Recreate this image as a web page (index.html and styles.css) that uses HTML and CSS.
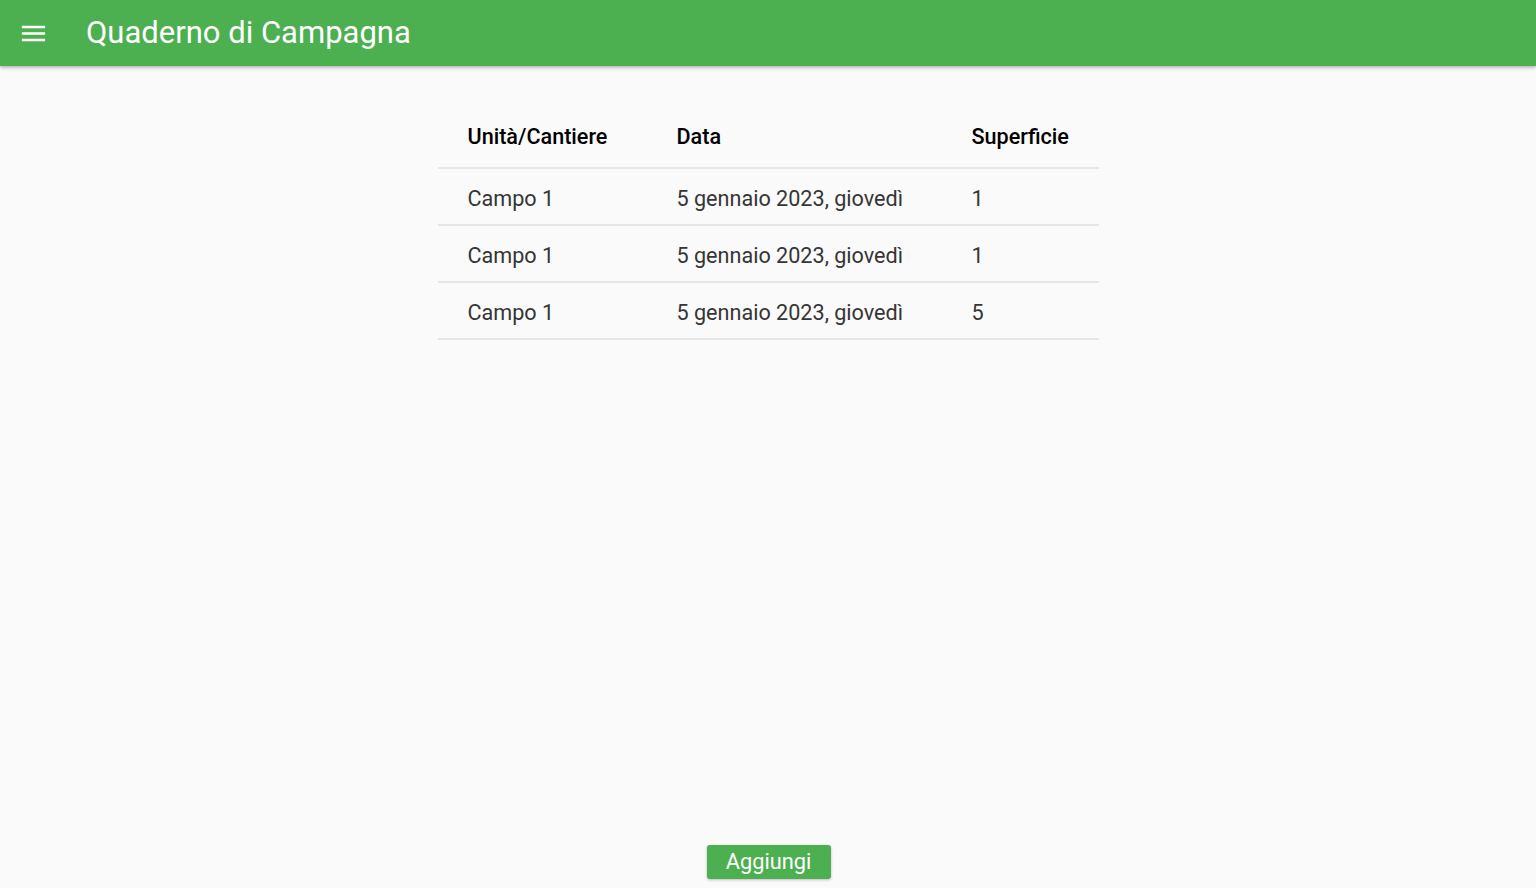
FILE: index.html
```html
<!DOCTYPE html>
<html lang="it">
<head>
<meta charset="utf-8">
<title>Quaderno di Campagna</title>
<link rel="stylesheet" href="styles.css">
</head>
<body>
<div class="app">
  <header class="appbar">
    <button class="menu" aria-label="menu">
      <svg width="24" height="24" viewBox="0 0 24 24"><path d="M3 18h18v-2H3v2zm0-5h18v-2H3v2zm0-7v2h18V6H3z" fill="#fff"/></svg>
    </button>
    <h1 class="title">Quaderno di Campagna</h1>
  </header>
  <main class="content">
    <table class="grid">
      <thead>
        <tr><th class="c1">Unità/Cantiere</th><th class="c2">Data</th><th class="c3">Superficie</th></tr>
      </thead>
      <tbody>
        <tr><td>Campo 1</td><td>5 gennaio 2023, giovedì</td><td>1</td></tr>
        <tr><td>Campo 1</td><td>5 gennaio 2023, giovedì</td><td>1</td></tr>
        <tr><td>Campo 1</td><td>5 gennaio 2023, giovedì</td><td>5</td></tr>
      </tbody>
    </table>
  </main>
  <footer class="actions">
    <button class="add">Aggiungi</button>
  </footer>
</div>
</body>
</html>
```
FILE: styles.css
```css
html, body {
  margin: 0;
  padding: 0;
  height: 100%;
}
body {
  background: #fafafa;
  font-family: Roboto, "Noto Sans", sans-serif;
  overflow: hidden;
}
.app {
  height: 888px;
  display: flex;
  flex-direction: column;
}
.appbar {
  height: 66px;
  flex: 0 0 66px;
  background: #4caf50;
  display: flex;
  align-items: center;
  box-shadow: 0 2px 4px rgba(0,0,0,0.2), 0 1px 2px rgba(0,0,0,0.12);
  position: relative;
  z-index: 1;
}
.menu {
  background: none;
  border: 0;
  padding: 0;
  margin-left: 17px;
  width: 32px;
  height: 32px;
  display: flex;
  align-items: center;
  justify-content: center;
}
.menu svg {
  width: 31px;
  height: 31px;
}
.title {
  margin: 0 0 0 37px;
  color: #fff;
  font-weight: 400;
  font-size: 31px;
  letter-spacing: 0;
  line-height: 1;
  padding-bottom: 1px;
}
.content {
  flex: 1;
  display: flex;
  justify-content: center;
  padding-top: 34px;
}
.grid {
  border-collapse: collapse;
  width: 661px;
  height: fit-content;
}
.grid th {
  text-align: left;
  font-weight: 500;
  font-size: 21.6px;
  color: #000;
  height: 62px;
  padding: 5px 0 0 30px;
  border-bottom: 2px solid #e6e6e6;
}
.grid td {
  font-size: 21.6px;
  color: #353535;
  height: 52px;
  padding: 3px 0 0 30px;
  border-bottom: 2px solid #e6e6e6;
}
.grid .c1 { width: 179px; }
.grid .c2 { width: 265px; }
.actions {
  flex: 0 0 auto;
  display: flex;
  justify-content: center;
  padding-bottom: 9px;
}
.add {
  margin-left: 1px;
  width: 124px;
  height: 34px;
  background: #4caf50;
  color: #fff;
  border: 0;
  border-radius: 3px;
  font-family: Roboto, sans-serif;
  font-size: 21.8px;
  padding: 0 0 2px;
  box-shadow: 0 1px 3px rgba(0,0,0,0.25);
}
```
